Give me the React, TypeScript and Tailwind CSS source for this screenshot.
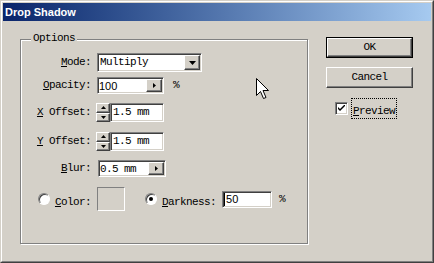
const mono = "font-['Liberation_Mono',monospace] text-[11px] tracking-[-0.6px]";
const sans = "font-['Liberation_Sans',Arial,sans-serif] text-[11px]";

// win2000 style edges
const sunken =
  'border border-t-[#808080] border-l-[#808080] border-r-white border-b-white shadow-[inset_1px_1px_0_#404040,inset_-1px_-1px_0_#d4d0c8]';
const raised =
  'border border-t-white border-l-white border-r-[#404040] border-b-[#404040] shadow-[inset_-1px_-1px_0_#808080] bg-[#d4d0c8]';

function Label({ k, rest }: { k: string; rest: string }) {
  return (
    <span className={`${mono} text-black whitespace-pre`}>
      <u>{k}</u>
      {rest}
    </span>
  );
}

function Row({ k, rest, className, children }: { k: string; rest: string; className: string; children: React.ReactNode }) {
  return (
    <div className={`flex items-center ${className}`}>
      <div className="w-[70px] flex justify-end">
        <Label k={k} rest={rest} />
      </div>
      <div className="ml-[6px] flex items-center">{children}</div>
    </div>
  );
}

function Spinner() {
  return (
    <div className="flex flex-col w-[14px] h-[19px]">
      <div className={`${raised} flex-1 flex items-center justify-center`}>
        <svg width="5" height="3" viewBox="0 0 5 3"><path d="M2.5 0L5 3H0z" fill="#000" /></svg>
      </div>
      <div className={`${raised} flex-1 flex items-center justify-center`}>
        <svg width="5" height="3" viewBox="0 0 5 3"><path d="M0 0h5L2.5 3z" fill="#000" /></svg>
      </div>
    </div>
  );
}

function ArrowBox({ value, width, font }: { value: string; width: string; font: string }) {
  return (
    <div className={`${sunken} bg-white flex items-center ${width} h-[17px] pl-[1px] pr-[1px]`}>
      <span className={`${font} flex-1 leading-none pt-[1px]`}>{value}</span>
      <div className={`${raised} w-[16px] h-[13px] flex items-center justify-center`}>
        <svg width="3" height="5" viewBox="0 0 3 5"><path d="M0 0l3 2.5L0 5z" fill="#000" /></svg>
      </div>
    </div>
  );
}

function Radio({ checked }: { checked?: boolean }) {
  return (
    <div className="w-[12px] h-[12px] rounded-full bg-white border border-t-[#808080] border-l-[#808080] border-r-white border-b-white shadow-[inset_1px_1px_0_#404040] flex items-center justify-center">
      {checked && <div className="w-[4px] h-[4px] rounded-full bg-black" />}
    </div>
  );
}

export default function App() {
  return (
    <div className="relative w-[434px] h-[263px] border border-t-[#d4d0c8] border-l-[#d4d0c8] border-r-[#404040] border-b-[#404040]">
      <div className="w-full h-full border border-t-white border-l-white border-r-[#808080] border-b-[#808080] bg-[#d4d0c8] p-px flex flex-col">
        {/* title bar */}
        <div className="h-[18px] bg-gradient-to-r from-[#0a246a] to-[#a6caf0] flex items-center pl-[2px]">
          <span className="font-['Liberation_Sans',Arial,sans-serif] font-bold text-[11px] text-white leading-none">Drop Shadow</span>
        </div>

        <div className="flex">
          {/* Options group */}
          <div className="relative ml-[17px] mt-[18px] w-[288px] h-[205px] border border-[#808080] shadow-[inset_1px_1px_0_#fff,1px_1px_0_#fff]">
            <span className={`absolute left-[10px] -top-[7px] px-[2px] bg-[#d4d0c8] ${mono} leading-none`}>Options</span>

            <Row k="M" rest="ode:" className="mt-[13px] h-[19px]">
              <div className={`${sunken} bg-white flex items-center w-[105px] h-[19px] pl-[2px] pr-[1px]`}>
                <span className={`${mono} flex-1 leading-none`}>Multiply</span>
                <div className={`${raised} w-[16px] h-[15px] flex items-center justify-center`}>
                  <svg width="7" height="4" viewBox="0 0 7 4"><path d="M0 0h7L3.5 4z" fill="#000" /></svg>
                </div>
              </div>
            </Row>

            <Row k="O" rest="pacity:" className="mt-[5px] h-[17px]">
              <ArrowBox value="100" width="w-[67px]" font={sans} />
              <span className={`${mono} ml-[9px]`}>%</span>
            </Row>

            <Row k="X" rest=" Offset:" className="mt-[9px] h-[19px]">
              <div className="-ml-[1px] flex items-center">
                <Spinner />
                <div className={`${sunken} bg-white w-[54px] h-[19px] flex items-center pl-[2px]`}>
                  <span className={`${mono} leading-none`}>1.5 mm</span>
                </div>
              </div>
            </Row>

            <Row k="Y" rest=" Offset:" className="mt-[10px] h-[19px]">
              <div className="-ml-[1px] flex items-center">
                <Spinner />
                <div className={`${sunken} bg-white w-[54px] h-[19px] flex items-center pl-[2px]`}>
                  <span className={`${mono} leading-none`}>1.5 mm</span>
                </div>
              </div>
            </Row>

            <Row k="B" rest="lur:" className="mt-[9px] h-[17px]">
              <div className="ml-[1px]">
                <ArrowBox value="0.5 mm" width="w-[68px]" font={mono} />
              </div>
            </Row>

            <div className="flex items-center mt-[10px] h-[24px]">
              <div className="w-[70px] flex items-center justify-end">
                <Radio />
                <span className="ml-[5px]">
                  <Label k="C" rest="olor:" />
                </span>
              </div>
              <div className="ml-[6px] w-[28px] h-[24px] border border-t-[#808080] border-l-[#808080] border-r-white border-b-white" />
              <div className="ml-[20px]">
                <Radio checked />
              </div>
              <span className="ml-[5px]">
                <Label k="D" rest="arkness:" />
              </span>
              <div className={`${sunken} ml-[6px] bg-white w-[50px] h-[17px] flex items-center pl-[1px]`}>
                <div className="w-px h-[13px] bg-black" />
                <span className={`${sans} leading-none ml-px`}>50</span>
              </div>
              <span className={`${mono} ml-[7px]`}>%</span>
            </div>
          </div>

          {/* buttons */}
          <div className="ml-[18px] mt-[16px] flex flex-col w-[87px]">
            <div className="border border-black">
              <div className={`${raised} h-[19px] flex items-center justify-center`}>
                <span className={`${mono} leading-none`}>OK</span>
              </div>
            </div>
            <div className={`${raised} mt-[9px] h-[21px] flex items-center justify-center`}>
              <span className={`${mono} leading-none`}>Cancel</span>
            </div>
            <div className="mt-[10px] ml-[9px] flex items-center">
              <div className={`${sunken} w-[13px] h-[13px] bg-white flex items-center justify-center`}>
                <svg width="7" height="7" viewBox="0 0 7 7"><path d="M0 2l2 2 5-5v2L2 6 0 4z" fill="#000" /></svg>
              </div>
              <span className="ml-[3px] px-[1px] border border-dotted border-black leading-none py-[1px]">
                <Label k="P" rest="review" />
              </span>
            </div>
          </div>
        </div>
      </div>

      {/* mouse pointer */}
      <svg className="absolute left-[255px] top-[77px]" width="13" height="21" viewBox="0 0 13 21">
        <path d="M0.5 0.5V17.5L4.5 13.5L7.5 20.5L10 19.5L7 12.5H12.5Z" fill="#fff" stroke="#000" strokeWidth="1" />
      </svg>
    </div>
  );
}
